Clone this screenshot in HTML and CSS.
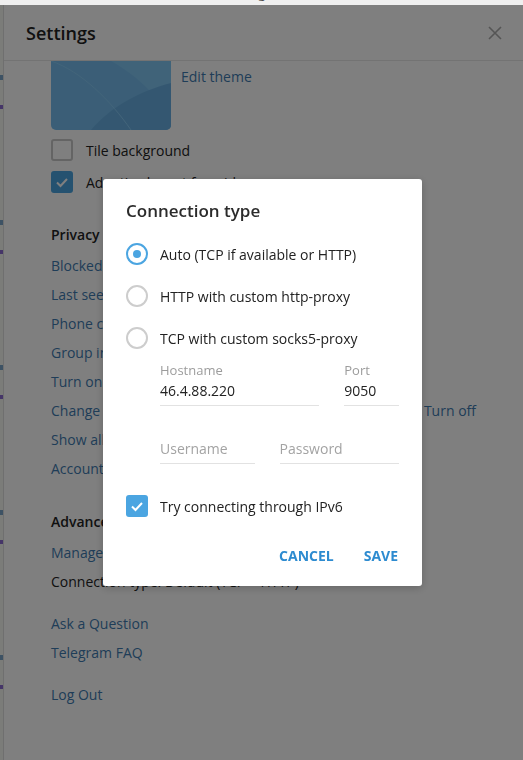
FILE: index.html
```html
<!DOCTYPE html>
<html lang="en">
<head>
<meta charset="utf-8">
<title>Settings</title>
<link rel="stylesheet" href="styles.css">
</head>
<body>
<div class="titlebar"><span class="title">Telegram</span></div>
<div class="app">
  <div class="sidebar"></div>
  <section class="settings">
    <header class="settings-head">
      <h1>Settings</h1>
      <svg class="close" width="14" height="14" viewBox="0 0 14 14"><path d="M1 1L13 13M13 1L1 13" stroke="#aaa" stroke-width="1.6" fill="none"/></svg>
    </header>
    <div class="settings-body">
      <div class="theme-row">
        <div class="theme-tile">
          <svg width="120" height="69" viewBox="0 0 120 69">
            <rect width="120" height="69" fill="#76bdee"/>
            <path d="M60 0 C95 20 115 45 120 69 L120 0 Z" fill="#80c6f3"/>
            <path d="M40 69 C60 45 90 30 120 22 L120 69 Z" fill="#69afe2"/>
            <path d="M0 0 C30 10 60 40 80 69" stroke="#86c9f4" stroke-width="1" fill="none"/>
          </svg>
        </div>
        <a class="link edit-theme">Edit theme</a>
      </div>
      <div class="check-row first"><span class="cb"></span><span>Tile background</span></div>
      <div class="check-row"><span class="cb on"><svg width="22" height="22" viewBox="0 0 22 22"><path d="M6 11.5L9.5 15L16 8" stroke="#fff" stroke-width="2" fill="none"/></svg></span><span>Adaptive layout for wide screens</span></div>

      <h2 class="section">Privacy and Security</h2>
      <ul class="links">
        <li><a class="link">Blocked users</a></li>
        <li><a class="link">Last seen &amp; online</a></li>
        <li><a class="link">Phone calls</a></li>
        <li><a class="link">Group invites</a></li>
        <li><a class="link">Turn on passcode lock</a></li>
        <li class="split"><a class="link">Change two-step verification password</a><a class="link">Turn off</a></li>
        <li><a class="link">Show all sessions</a></li>
        <li><a class="link">Account self-destruct</a></li>
      </ul>

      <h2 class="section advanced">Advanced</h2>
      <ul class="links">
        <li><a class="link">Manage local storage</a></li>
        <li class="plain">Connection type: Default (TCP + HTTP)</li>
      </ul>
      <ul class="links gap">
        <li><a class="link">Ask a Question</a></li>
        <li><a class="link">Telegram FAQ</a></li>
      </ul>
      <ul class="links gap">
        <li><a class="link">Log Out</a></li>
      </ul>
    </div>
  </section>
</div>

<div class="overlay">
  <div class="dialog">
    <h3 class="dialog-title">Connection type</h3>
    <div class="radios">
      <div class="radio-row"><span class="radio on"></span><span>Auto (TCP if available or HTTP)</span></div>
      <div class="radio-row"><span class="radio"></span><span>HTTP with custom http-proxy</span></div>
      <div class="radio-row"><span class="radio"></span><span>TCP with custom socks5-proxy</span></div>
    </div>
    <div class="fields">
      <div class="field-row">
        <div class="field host"><span class="field-label">Hostname</span><input class="input" type="text" value="46.4.88.220" aria-label="Hostname"></div>
        <div class="field port"><span class="field-label">Port</span><input class="input" type="text" value="9050" aria-label="Port"></div>
      </div>
      <div class="field-row second">
        <div class="field user"><input class="input" type="text" placeholder="Username"></div>
        <div class="field pass"><input class="input" type="password" placeholder="Password"></div>
      </div>
    </div>
    <div class="dcheck-row"><span class="cb blue"><svg width="22" height="22" viewBox="0 0 22 22"><path d="M6 11.5L9.5 15L16 8" stroke="#fff" stroke-width="2" fill="none"/></svg></span><span>Try connecting through IPv6</span></div>
    <div class="buttons">
      <button class="btn">Cancel</button>
      <button class="btn">Save</button>
    </div>
  </div>
</div>
</body>
</html>
```

FILE: styles.css
```css
html, body {
  margin: 0;
  padding: 0;
}
body {
  font-family: "Open Sans", "DejaVu Sans", sans-serif;
  background: #fff;
  color: #222;
  width: 523px;
  height: 760px;
  overflow: hidden;
}
.titlebar {
  height: 5px;
  background: #efefef;
  overflow: hidden;
  text-align: center;
}
.title {
  display: block;
  font-size: 13px;
  line-height: 13px;
  margin-top: -13px;
  color: #4a4a4a;
}
.app {
  display: flex;
  height: 755px;
}
.sidebar {
  width: 3px;
  flex: none;
  background:
    repeating-linear-gradient(to bottom,
      transparent 0, transparent 70px,
      #7aa4c8 70px, #7aa4c8 75px,
      transparent 75px, transparent 100px,
      #8a6ad0 100px, #8a6ad0 104px,
      transparent 104px, transparent 145px),
    #f6f8f3;
}
.settings {
  flex: 1;
  background: #fff;
  border-left: 1px solid #dedede;
  display: flex;
  flex-direction: column;
}
.settings-head {
  height: 55px;
  border-bottom: 1px solid #e6e6e6;
  display: flex;
  align-items: center;
  justify-content: space-between;
  padding: 0 22px;
  flex: none;
}
.settings-head h1 {
  margin: 0;
  font-size: 18px;
  font-weight: 600;
  color: #222;
}
.close {
  display: block;
  margin-right: -1px;
}
.settings-body {
  padding: 0 47px;
  font-size: 14px;
}
.theme-row {
  display: flex;
  gap: 10px;
}
.theme-tile {
  width: 120px;
  height: 69px;
  border-radius: 0 0 5px 5px;
  overflow: hidden;
}
.theme-tile svg {
  display: block;
}
.link {
  color: #3f7bb0;
  text-decoration: none;
  cursor: pointer;
}
.edit-theme {
  display: block;
  padding-top: 6px;
  line-height: 20px;
}
.check-row {
  display: flex;
  align-items: center;
  gap: 13px;
  height: 32px;
}
.check-row.first {
  margin-top: 4px;
}
.cb {
  width: 22px;
  height: 22px;
  box-sizing: border-box;
  border: 2px solid #c8c8c8;
  border-radius: 3px;
  flex: none;
}
.cb svg {
  display: block;
}
.cb.on,
.cb.blue {
  border: 0;
  background: #4ba5e1;
}
.section {
  margin: 22px 0 2px;
  font-size: 14px;
  font-weight: 600;
  line-height: 29px;
  color: #222;
}
.section.advanced {
  margin-top: 24px;
}
.links {
  list-style: none;
  margin: 0;
  padding: 0;
  line-height: 29px;
}
.links.gap {
  margin-top: 13px;
}
.split {
  display: flex;
  justify-content: space-between;
  white-space: nowrap;
}
.plain {
  color: #222;
}

.overlay {
  position: fixed;
  top: 5px;
  left: 0;
  right: 0;
  bottom: 0;
  background: rgba(0, 0, 0, 0.5);
  padding: 174px 0 0 103px;
  box-sizing: border-box;
}
.dialog {
  width: 319px;
  box-sizing: border-box;
  background: #fff;
  border-radius: 3px;
  box-shadow: 0 2px 8px rgba(0, 0, 0, 0.2);
  padding: 20px 23px 13px;
  font-size: 14px;
  color: #222;
}
.dialog-title {
  margin: 0;
  font-size: 17px;
  font-weight: 600;
  line-height: 24px;
  color: #2b2b2b;
}
.radios {
  margin-top: 10px;
}
.radio-row {
  display: flex;
  align-items: center;
  gap: 12px;
  height: 42px;
}
.radio {
  width: 22px;
  height: 22px;
  box-sizing: border-box;
  border: 2px solid #cdcdcd;
  border-radius: 50%;
  flex: none;
  display: flex;
  align-items: center;
  justify-content: center;
}
.radio.on {
  border-color: #4ba5e1;
}
.radio.on::after {
  content: "";
  width: 8px;
  height: 8px;
  border-radius: 50%;
  background: #4ba5e1;
}
.fields {
  margin-left: 34px;
}
.field-row {
  display: flex;
  gap: 25px;
  margin-top: 2px;
}
.field-row.second {
  margin-top: 31px;
}
.field {
  display: flex;
  flex-direction: column;
}
.field-label {
  font-size: 13px;
  line-height: 18px;
  color: #9c9c9c;
}
.input {
  font-family: "Open Sans", "DejaVu Sans", sans-serif;
  font-size: 14px;
  line-height: 22px;
  height: 27px;
  color: #222;
  border: 0;
  border-bottom: 1px solid #e2e2e2;
  padding: 0 0 4px;
  margin: 0;
  outline: none;
  background: transparent;
  box-sizing: border-box;
  width: 100%;
}
.input::placeholder {
  color: #a3a3a3;
}
.field.host { width: 160px; }
.field.port { width: 55px; }
.field.user { width: 95px; }
.field.pass { width: 120px; }
.dcheck-row {
  display: flex;
  align-items: center;
  gap: 12px;
  height: 22px;
  margin-top: 31px;
}
.buttons {
  display: flex;
  justify-content: flex-end;
  gap: 14px;
  margin-top: 20px;
  margin-right: -7px;
}
.btn {
  font-family: "Open Sans", "DejaVu Sans", sans-serif;
  font-size: 14px;
  font-weight: 700;
  text-transform: uppercase;
  color: #2d8bd0;
  background: none;
  border: 0;
  height: 36px;
  padding: 0 8px;
  cursor: pointer;
}
```
